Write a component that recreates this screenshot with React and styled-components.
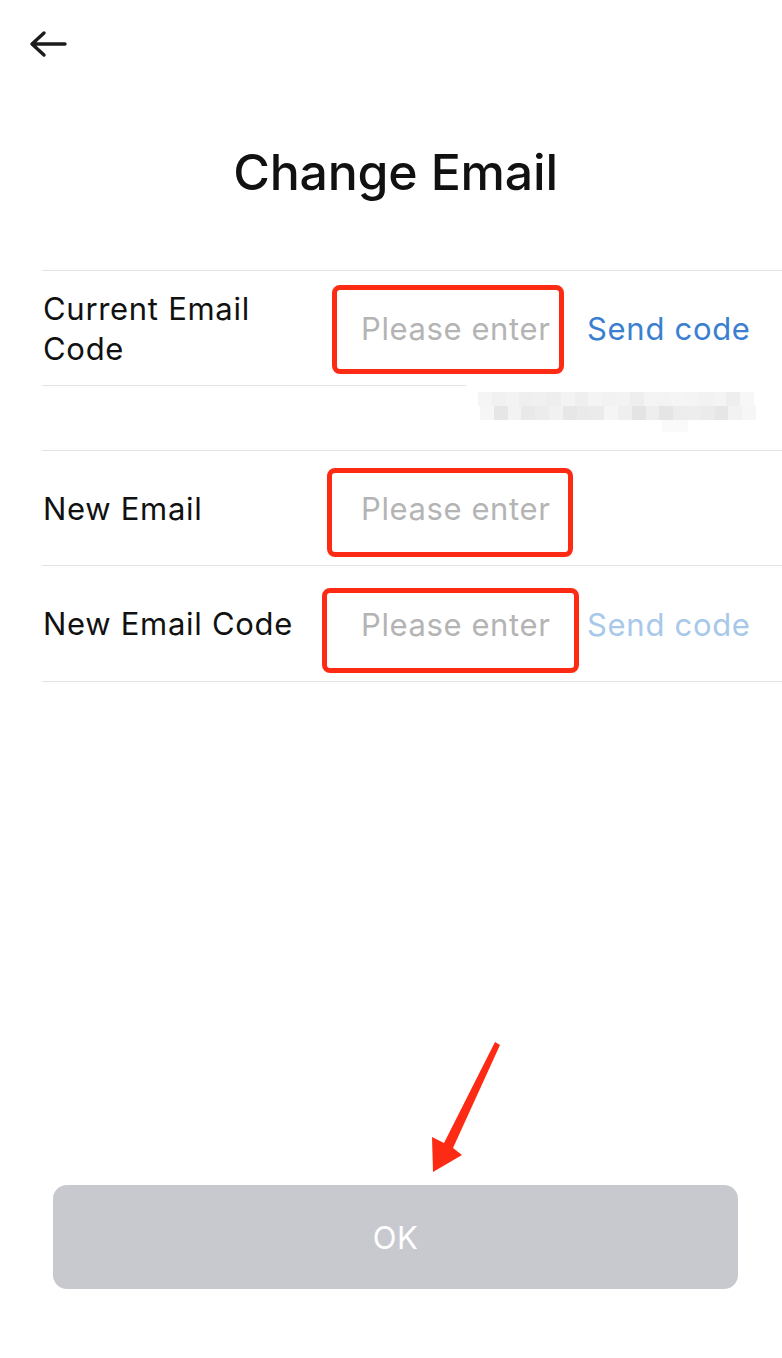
import React from "react";
import styled, {createGlobalStyle} from "styled-components";

const GlobalStyle = createGlobalStyle`
  html, body {
    margin: 0;
    padding: 0;
    background: #ffffff;
  }
  body {
    font-family: Inter, "Noto Sans", "Liberation Sans", sans-serif;
    color: #111111;
  }
`;

// grey shades for the pixelated (masked) current email
const mosaicTop = [
  "#f5f5f5", "#f1f1f1", "#f3f3f3", "#efefef", "#f0f0f0", "#eeeeee", "#f3f3f3",
  "#efefef", "#f4f4f4", "#f2f2f2", "#f3f3f3", "#eeeeee", "#f4f4f4", "#f3f3f3",
  "#f5f5f5", "#f4f4f4", "#f2f2f2", "#f4f4f4", "#eeeeee", "#f7f7f7",
];
const mosaicBottom = [
  "#f6f6f6", "#e6e6e6", "#f3f3f3", "#e9e9e9", "#ececec", "#f1f1f1", "#e7e7e7",
  "#eaeaea", "#ebebeb", "#f5f5f5", "#efefef", "#e4e4e4", "#eeeeee", "#e5e5e5",
  "#ececec", "#ededed", "#ebebeb", "#e6e6e6", "#f2f2f2", "#f6f6f6",
];

const rows = [
  {
    label: ["Current Email", "Code"],
    send: "active",
    height: 115,
    mark: {left: -29, top: 14, width: 232, height: 89},
    lineRight: 316,
  },
  {email: true},
  {
    label: ["New Email"],
    height: 115,
    mark: {left: -34, top: 17, width: 246, height: 89},
  },
  {
    label: ["New Email Code"],
    send: "disabled",
    height: 116,
    mark: {left: -39, top: 22, width: 257, height: 85},
  },
];

const BackIcon = () => (
  <svg width="40" height="32" viewBox="0 0 40 32" fill="none">
    <path
      d="M3 14 H36 M3 14 L15 3 M3 14 L15 25"
      stroke="#1c1c1c"
      strokeWidth="3.4"
      strokeLinecap="round"
      strokeLinejoin="round"
    />
  </svg>
);

const App = () => {
  return (
    <Page>
      <GlobalStyle />
      <Header>
        <BackButton aria-label="Back">
          <BackIcon />
        </BackButton>
      </Header>
      <Title>Change Email</Title>

      <List>
        {rows.map((row, i) =>
          row.email ? (
            <EmailRow key={i}>
              <Mosaic>
                <MosaicLine>
                  {mosaicTop.map((c, j) => (
                    <MosaicCell key={j} $color={c} />
                  ))}
                </MosaicLine>
                <MosaicLine $shift={2}>
                  {mosaicBottom.map((c, j) => (
                    <MosaicCell key={j} $color={c} />
                  ))}
                </MosaicLine>
                <MosaicTail />
              </Mosaic>
            </EmailRow>
          ) : (
            <Row key={i} $height={row.height} $lineRight={row.lineRight || 0}>
              <Label>
                {row.label.map(l => (
                  <span key={l}>{l}</span>
                ))}
              </Label>
              <InputCell>
                <Input placeholder="Please enter" />
                <Mark
                  $left={row.mark.left}
                  $top={row.mark.top}
                  $width={row.mark.width}
                  $height={row.mark.height}
                />
              </InputCell>
              {row.send && (
                <SendCode $disabled={row.send === "disabled"}>Send code</SendCode>
              )}
            </Row>
          )
        )}
      </List>

      <Footer>
        <OkButton>OK</OkButton>
      </Footer>

      <PointerArrow width="80" height="145" viewBox="0 0 80 145">
        <polygon
          points="70,7 75,10 28,113 37,120 8,137 7,102 19,108"
          fill="#fe2b14"
        />
      </PointerArrow>
    </Page>
  );
};

export default App;

const Page = styled.div`
  position: relative;
  width: 782px;
  min-height: 1358px;
  display: flex;
  flex-direction: column;
  background: #ffffff;
  overflow: hidden;
`;
const Header = styled.div`
  height: 88px;
  display: flex;
  align-items: flex-start;
  padding: 30px 0 0 29px;
  box-sizing: border-box;
`;
const BackButton = styled.button`
  border: none;
  background: none;
  padding: 0;
  margin: 0;
  width: 40px;
  height: 32px;
  cursor: pointer;
`;
const Title = styled.h1`
  margin: 54px 0 0;
  padding-left: 9px;
  text-align: center;
  font-size: 50px;
  line-height: 60px;
  font-weight: 500;
  letter-spacing: -0.2px;
  color: #111111;
`;
const List = styled.div`
  margin: 68px 0 0 42px;
  border-top: 1px solid #e4e4e4;
`;
const Row = styled.div`
  position: relative;
  display: flex;
  align-items: center;
  height: ${p => p.$height}px;
  padding-left: 1px;

  &::after {
    content: "";
    position: absolute;
    left: 0;
    right: ${p => p.$lineRight}px;
    bottom: 0;
    height: 1px;
    background: #e4e4e4;
  }
`;
const Label = styled.div`
  width: 318px;
  display: flex;
  flex-direction: column;
  font-size: 31px;
  line-height: 40px;
  letter-spacing: 0.7px;
  color: #111111;
`;
const InputCell = styled.div`
  position: relative;
  align-self: stretch;
  width: 226px;
  display: flex;
  align-items: center;
`;
const Input = styled.input`
  width: 100%;
  border: none;
  outline: none;
  padding: 0;
  background: transparent;
  font-family: inherit;
  font-size: 31px;
  letter-spacing: 0.6px;
  color: #111111;

  &::placeholder {
    color: #b4b4b4;
  }
`;
const Mark = styled.div`
  position: absolute;
  left: ${p => p.$left}px;
  top: ${p => p.$top}px;
  width: ${p => p.$width}px;
  height: ${p => p.$height}px;
  box-sizing: border-box;
  border: 5px solid #fe2b14;
  border-radius: 8px;
  pointer-events: none;
`;
const SendCode = styled.span`
  font-size: 31px;
  letter-spacing: 0.7px;
  color: ${p => (p.$disabled ? "#a8c8ea" : "#3a80cf")};
  cursor: pointer;
`;
const EmailRow = styled.div`
  height: 65px;
  padding: 6px 0 0 436px;
  box-sizing: border-box;
  border-bottom: 1px solid #e4e4e4;
`;
const Mosaic = styled.div`
  display: flex;
  flex-direction: column;
  width: 280px;
`;
const MosaicLine = styled.div`
  display: flex;
  height: 14px;
  margin-left: ${p => p.$shift || 0}px;
`;
const MosaicCell = styled.div`
  width: 13.8px;
  height: 100%;
  background: ${p => p.$color};
`;
const MosaicTail = styled.div`
  width: 26px;
  height: 12px;
  margin-left: 184px;
  background: #fafafa;
`;
const Footer = styled.div`
  margin-top: auto;
  padding: 0 44px 69px 53px;
`;
const OkButton = styled.button`
  width: 100%;
  height: 104px;
  border: none;
  border-radius: 14px;
  background: #c8c9ce;
  color: #ffffff;
  font-family: inherit;
  font-size: 31px;
  letter-spacing: 0.6px;
  cursor: pointer;
`;
const PointerArrow = styled.svg`
  position: absolute;
  left: 425px;
  top: 1035px;
`;
